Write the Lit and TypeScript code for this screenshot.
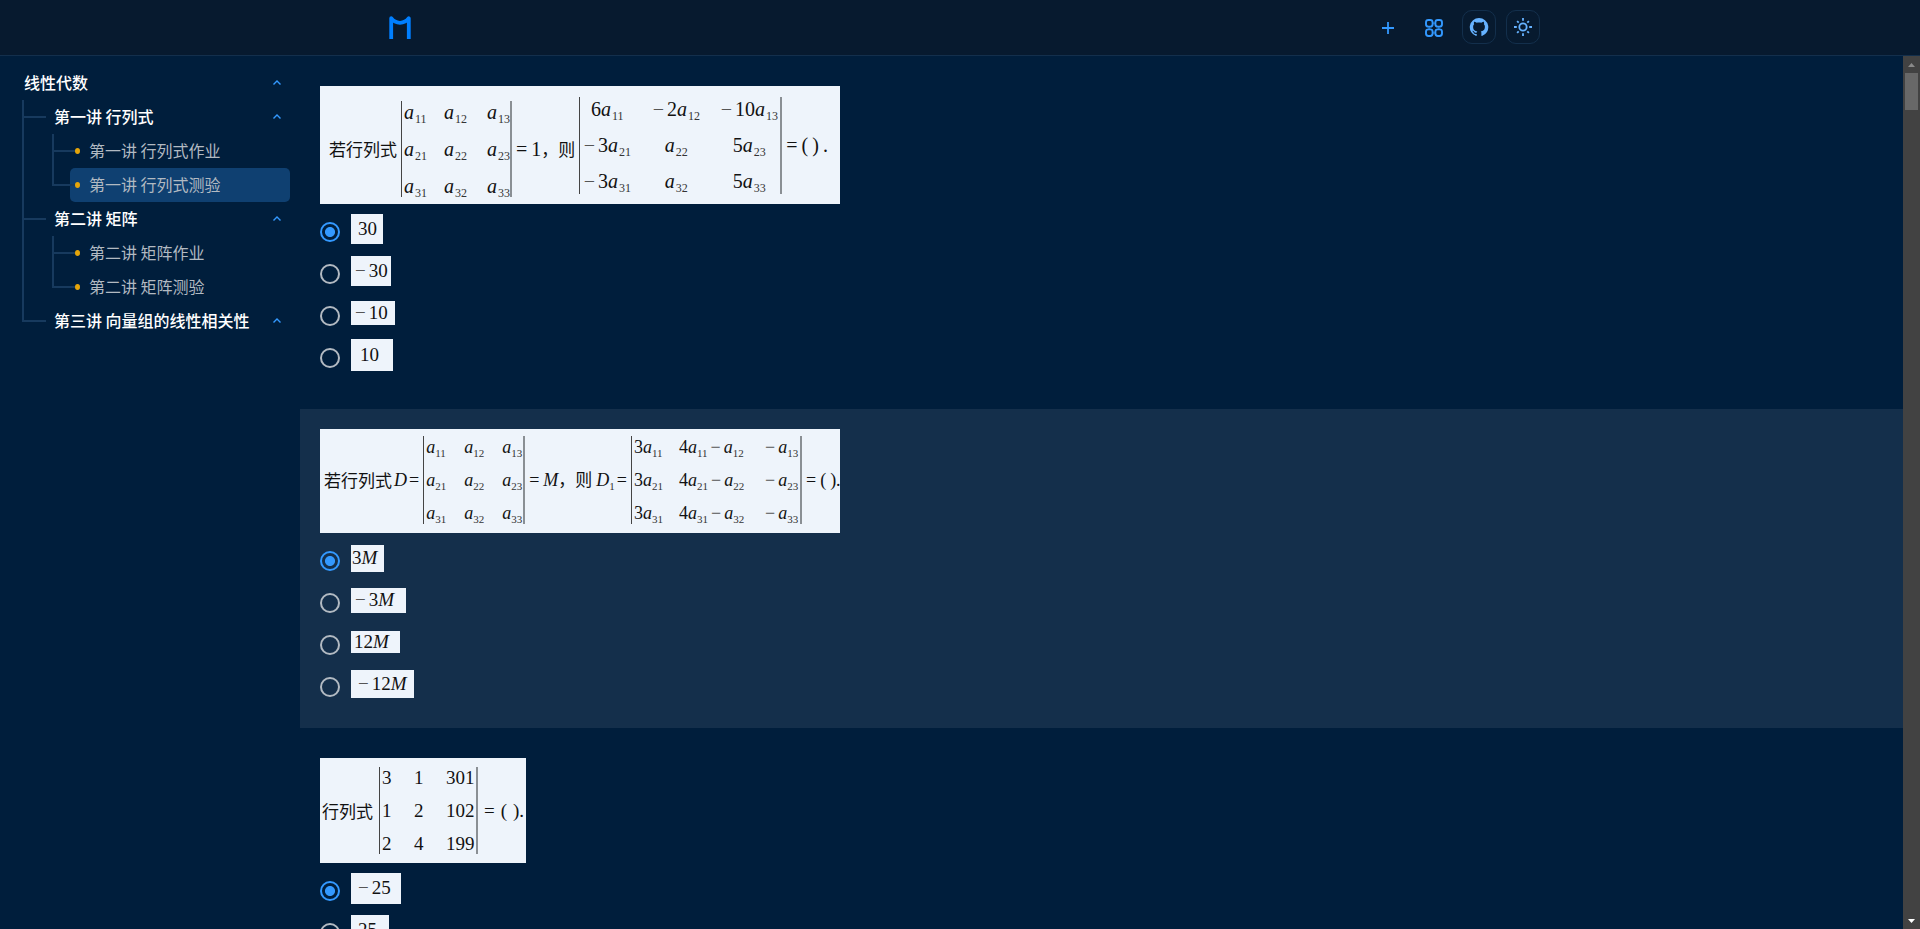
import { LitElement, html, css, svg, nothing, TemplateResult } from "lit";
import { customElement, property, state } from "lit/decorators.js";
import { classMap } from "lit/directives/class-map.js";
import { styleMap } from "lit/directives/style-map.js";

interface TreeNode {
  title: string;
  children?: TreeNode[];
  leaf?: boolean;
}

interface Choice {
  text: string;
  width: number;
  height: number;
  inset: number;
}

interface Question {
  id: string;
  stem: TemplateResult;
  choices: Choice[];
}

const course: TreeNode = {
  title: "线性代数",
  children: [
    {
      title: "第一讲 行列式",
      children: [
        { title: "第一讲 行列式作业", leaf: true },
        { title: "第一讲 行列式测验", leaf: true },
      ],
    },
    {
      title: "第二讲 矩阵",
      children: [
        { title: "第二讲 矩阵作业", leaf: true },
        { title: "第二讲 矩阵测验", leaf: true },
      ],
    },
    { title: "第三讲 向量组的线性相关性", children: [] },
  ],
};

/* Small formula notation: "_12" is a subscript, "-" a minus sign, latin letters are italic. */
function tex(source: string) {
  const parts = source.match(/_\d+|[A-Za-z]|-|[^_A-Za-z-]+/g) ?? [];
  return parts.map((p, i) => {
    if (p.startsWith("_")) return html`<sub>${p.slice(1)}</sub>`;
    if (p === "-") return html`<span class=${classMap({ minus: true, binary: i > 0 })}>−</span>`;
    if (/[A-Za-z]/.test(p)) return html`<i>${p}</i>`;
    return html`${p}`;
  });
}

function det(kind: string, rows: string[][]) {
  return html`<span class="det ${kind}"
    >${rows.flat().map((cell) => html`<span class="cell">${tex(cell)}</span>`)}</span
  >`;
}

const questions: Question[] = [
  {
    id: "q1",
    stem: html`<div class="stem large">
      <div class="run low">
        <span class="cjk">若行列式</span>
        ${det("plain", [
          ["a_11", "a_12", "a_13"],
          ["a_21", "a_22", "a_23"],
          ["a_31", "a_32", "a_33"],
        ])}
        <span>=</span>
        <span>1<span class="cjk">，则</span></span>
      </div>
      <div class="run">
        ${det("scaled", [
          ["6a_11", "-2a_12", "-10a_13"],
          ["-3a_21", "a_22", "5a_23"],
          ["-3a_31", "a_32", "5a_33"],
        ])}
        <span>=</span>
        <span class="paren"><span>(</span><span>)</span><span>.</span></span>
      </div>
    </div>`,
    choices: [
      { text: "30", width: 32, height: 30, inset: 7 },
      { text: "-30", width: 40, height: 30, inset: 4 },
      { text: "-10", width: 44, height: 24, inset: 4 },
      { text: "10", width: 42, height: 32, inset: 9 },
    ],
  },
  {
    id: "q2",
    stem: html`<div class="stem medium">
      <div class="run">
        <span class="cjk">若行列式</span>
        <span class="term"><i>D</i><span>=</span></span>
        ${det("square", [
          ["a_11", "a_12", "a_13"],
          ["a_21", "a_22", "a_23"],
          ["a_31", "a_32", "a_33"],
        ])}
        <span>=</span>
        <span><i>M</i><span class="cjk">，则</span></span>
        <span class="term"><span><i>D</i><sub>1</sub></span><span>=</span></span>
        ${det("mixed", [
          ["3a_11", "4a_11-a_12", "-a_13"],
          ["3a_21", "4a_21-a_22", "-a_23"],
          ["3a_31", "4a_31-a_32", "-a_33"],
        ])}
        <span>=</span>
        <span class="paren"><span>(</span><span>).</span></span>
      </div>
    </div>`,
    choices: [
      { text: "3M", width: 33, height: 27, inset: 1 },
      { text: "-3M", width: 55, height: 25, inset: 4 },
      { text: "12M", width: 49, height: 22, inset: 3 },
      { text: "-12M", width: 63, height: 28, inset: 7 },
    ],
  },
  {
    id: "q3",
    stem: html`<div class="stem short">
      <div class="run">
        <span class="cjk">行列式</span>
        ${det("numeric", [
          ["3", "1", "301"],
          ["1", "2", "102"],
          ["2", "4", "199"],
        ])}
        <span>=</span>
        <span class="paren"><span>(</span><span>).</span></span>
      </div>
    </div>`,
    choices: [
      { text: "-25", width: 50, height: 31, inset: 7 },
      { text: "25", width: 38, height: 30, inset: 7 },
    ],
  },
];

@customElement("app-header")
class AppHeader extends LitElement {
  static styles = css`
    :host {
      display: block;
      background: #071a2f;
      border-bottom: 1px solid #132f4c;
    }
    .bar {
      display: flex;
      justify-content: space-between;
      box-sizing: border-box;
      max-width: 1160px;
      margin: 0 auto;
      padding: 10px 0 11px 8px;
    }
    .logo {
      display: flex;
      align-items: center;
      color: #007fff;
    }
    .actions {
      display: flex;
      gap: 10px;
    }
    button,
    .boxed {
      display: flex;
      align-items: center;
      justify-content: center;
      box-sizing: border-box;
      width: 36px;
      height: 34px;
      padding: 0;
      border: 0;
      border-radius: 10px;
      background: none;
      color: #3399ff;
      cursor: pointer;
    }
    .boxed {
      width: 34px;
      border: 1px solid #132f4c;
      color: #66b2ff;
    }
  `;

  render() {
    return html`<header class="bar">
      <a class="logo" href="#" aria-label="首页">
        <svg width="24" height="24" viewBox="0 0 24 24" fill="none" stroke="currentColor" stroke-width="3.800">
          <path d="M3.200 24V3.200C6 7 9 7.800 12 7.800s6-.8 8.800-4.600V24" stroke-linejoin="round" />
        </svg>
      </a>
      <nav class="actions">
        <button aria-label="添加">
          <svg width="20" height="20" viewBox="0 0 20 20" stroke="currentColor" stroke-width="1.800">
            <path d="M10 5v12M4 11h12" />
          </svg>
        </button>
        <button aria-label="应用">
          <svg width="20" height="20" viewBox="0 0 20 20" fill="none" stroke="currentColor" stroke-width="1.900">
            <rect x="2" y="3" width="6.600" height="6.600" rx="2.400" />
            <rect x="11.400" y="3" width="6.600" height="6.600" rx="2.400" />
            <rect x="2" y="12.400" width="6.600" height="6.600" rx="2.400" />
            <rect x="11.400" y="12.400" width="6.600" height="6.600" rx="2.400" />
            <path d="M8 6.300h4M8 15.700h4M5.300 9v4M14.700 9v4" stroke-opacity=".5" />
          </svg>
        </button>
        <a class="boxed" href="#" aria-label="GitHub">
          <svg width="20" height="20" viewBox="0 0 24 24" fill="currentColor">
            <path
              d="M12 1.270a11 11 0 00-3.480 21.460c.55.09.73-.28.73-.55v-1.840c-3.030.64-3.670-1.460-3.670-1.460-.55-1.290-1.280-1.650-1.280-1.650-.92-.65.1-.65.1-.65 1.100 0 1.730 1.100 1.730 1.100.92 1.650 2.570 1.200 3.210.92a2 2 0 01.64-1.470c-2.470-.27-5.040-1.190-5.040-5.500 0-1.100.46-2.100 1.200-2.840a3.760 3.760 0 010-2.930s.91-.28 3.110 1.100c1.800-.49 3.700-.49 5.500 0 2.100-1.380 3.020-1.100 3.020-1.100a3.760 3.760 0 01.1 2.930c.83.74 1.200 1.740 1.200 2.940 0 4.210-2.570 5.130-5.040 5.400.45.37.82.92.82 2.020v3.030c0 .27.1.64.73.55A11 11 0 0012 1.270"
            />
          </svg>
        </a>
        <button class="boxed" aria-label="切换主题">
          <svg width="20" height="20" viewBox="0 0 20 20" fill="none" stroke="currentColor" stroke-width="1.800">
            <circle cx="10" cy="10" r="3.700" />
            <path
              d="M10 1v2.800M10 16.200V19M1 10h2.800M16.200 10H19M4.100 4.100l1.600 1.600M14.300 14.300l1.600 1.600M4.100 15.900l1.600-1.600M14.300 5.700l1.600-1.600"
            />
          </svg>
        </button>
      </nav>
    </header>`;
  }
}

@customElement("course-tree")
class CourseTree extends LitElement {
  @state() private selected = "第一讲 行列式测验";
  @state() private closed = new Set<string>();

  static styles = css`
    :host {
      display: block;
      box-sizing: border-box;
      padding: 10px;
    }
    ul {
      list-style: none;
      margin: 0;
      padding: 0;
    }
    ul ul {
      padding-left: 30px;
    }
    li {
      position: relative;
    }
    .row {
      display: flex;
      align-items: center;
      justify-content: space-between;
      box-sizing: border-box;
      width: 100%;
      height: 34px;
      padding: 0 9px 0 14px;
      border: 0;
      border-radius: 5px;
      background: none;
      color: #fff;
      font: 500 16px/32px "Noto Sans CJK SC", sans-serif;
      text-align: left;
      text-decoration: none;
      white-space: nowrap;
      cursor: pointer;
    }
    .title {
      padding-bottom: 2px;
    }
    .chevron {
      color: #3399ff;
    }
    .row.leaf {
      justify-content: flex-start;
      gap: 9px;
      padding-left: 5px;
      color: #b2bac2;
      font-weight: 400;
    }
    .row.selected {
      background: #0f4071;
    }
    .dot {
      width: 5px;
      height: 6px;
      border-radius: 50%;
      background: #e5a50a;
      z-index: 1;
    }
    /* connector lines between a branch and its children */
    ul ul > li::before,
    ul ul > li::after {
      content: "";
      position: absolute;
      left: -18px;
      background: #173a5e;
    }
    ul ul > li::before {
      top: 0;
      bottom: 0;
      width: 2px;
    }
    ul ul > li:last-child::before {
      bottom: auto;
      height: 18px;
    }
    ul ul > li::after {
      top: 16px;
      width: 24px;
      height: 2px;
    }
  `;

  private toggle(title: string) {
    const next = new Set(this.closed);
    next.has(title) ? next.delete(title) : next.add(title);
    this.closed = next;
  }

  private node(n: TreeNode): TemplateResult {
    if (n.leaf) {
      return html`<li>
        <a
          class=${classMap({ row: true, leaf: true, selected: n.title === this.selected })}
          href="#"
          @click=${(e: Event) => {
            e.preventDefault();
            this.selected = n.title;
          }}
          ><span class="dot"></span><span class="title">${n.title}</span></a
        >
      </li>`;
    }
    const open = !this.closed.has(n.title);
    return html`<li>
      <button class="row" aria-expanded=${open} @click=${() => this.toggle(n.title)}>
        <span class="title">${n.title}</span>
        <svg class="chevron" width="8" height="8" viewBox="0 0 8 8" fill="none" stroke="currentColor" stroke-width="1.400">
          ${open ? svg`<path d="M.5 5.500 4 2l3.500 3.500" />` : svg`<path d="M.5 2 4 5.500 7.500 2" />`}
        </svg>
      </button>
      ${open && n.children?.length ? html`<ul>${n.children.map((c) => this.node(c))}</ul>` : nothing}
    </li>`;
  }

  render() {
    return html`<nav aria-label="课程目录"><ul>${this.node(course)}</ul></nav>`;
  }
}

@customElement("question-card")
class QuestionCard extends LitElement {
  @property({ attribute: false }) question!: Question;
  @state() private picked = 0;

  static styles = css`
    :host {
      display: block;
      padding: 20px;
    }
    fieldset {
      display: flex;
      flex-direction: column;
      align-items: flex-start;
      gap: 7px;
      min-width: 0;
      margin: 0;
      padding: 0;
      border: 0;
    }
    .stem,
    .picture {
      display: flex;
      align-items: center;
      box-sizing: border-box;
      background: #eef4fb;
      color: #111;
      font-family: "Liberation Serif", serif;
      white-space: nowrap;
    }
    .run {
      display: flex;
      align-items: center;
      gap: 4px;
    }
    .large {
      width: 520px;
      height: 118px;
      gap: 4px;
      padding-left: 9px;
      font-size: 20px;
      line-height: 20px;
    }
    .low {
      padding-top: 8px;
    }
    .medium {
      width: 520px;
      height: 104px;
      padding: 0 0 3px 4px;
      font-size: 18px;
      line-height: 20px;
    }
    .medium .run > .cjk {
      margin-right: -2px;
    }
    .short {
      width: 206px;
      height: 105px;
      padding-left: 2px;
      font-size: 19px;
      line-height: 20px;
    }
    .short .run {
      gap: 6px;
    }
    .cjk {
      font-family: "Noto Sans CJK SC", sans-serif;
      font-size: 17px;
      font-weight: 400;
      line-height: 20px;
    }
    .paren {
      display: flex;
      gap: 4px;
    }
    .short .paren {
      gap: 6px;
    }
    .term {
      display: flex;
      gap: 2px;
    }
    sub {
      margin-left: 1px;
      font-size: 12px;
      line-height: 0;
      vertical-align: -4px;
      color: #333;
    }
    .medium sub {
      margin-left: 0;
      font-size: 11px;
    }
    .minus {
      margin-right: 3px;
      color: #555;
    }
    .minus.binary {
      margin-left: 3px;
    }
    .det {
      display: grid;
      align-content: center;
      align-items: center;
      box-sizing: border-box;
      border-left: 1px solid #444;
      border-right: 2px solid #8a8f94;
    }
    .plain {
      grid-template-columns: 40px 43px 23px;
      grid-auto-rows: 37px;
      height: 96px;
      padding-left: 2px;
    }
    .scaled {
      grid-template-columns: 54px 84px 62px;
      grid-auto-rows: 36px;
      height: 97px;
      text-align: center;
    }
    .square {
      grid-template-columns: 38px 38px 21px;
      grid-auto-rows: 33px;
      height: 88px;
      padding-left: 2px;
    }
    .mixed {
      grid-template-columns: 45px 86px 35px;
      grid-auto-rows: 33px;
      height: 88px;
      padding-left: 2px;
    }
    .numeric {
      grid-template-columns: 32px 32px 30px;
      grid-auto-rows: 33px;
      height: 87px;
      padding-left: 2px;
    }
    .choices {
      display: flex;
      flex-direction: column;
    }
    .choice {
      display: flex;
      align-items: center;
      gap: 11px;
      height: 42px;
      cursor: pointer;
    }
    input {
      appearance: none;
      box-sizing: border-box;
      width: 20px;
      height: 20px;
      margin: 0;
      border: 2px solid #b2bac2;
      border-radius: 50%;
    }
    input:checked {
      border-color: #3399ff;
      background: radial-gradient(circle, #3399ff 0 4.600px, transparent 5.400px);
    }
    .picture {
      margin-bottom: 6px;
      font-size: 19px;
      line-height: 20px;
    }
  `;

  render() {
    const q = this.question;
    return html`<fieldset>
      ${q.stem}
      <div class="choices">
        ${q.choices.map(
          (c, i) => html`<label class="choice">
            <input type="radio" name=${q.id} .checked=${i === this.picked} @change=${() => (this.picked = i)} />
            <span
              class="picture"
              style=${styleMap({ width: `${c.width}px`, height: `${c.height}px`, paddingLeft: `${c.inset}px` })}
              ><span>${tex(c.text)}</span></span
            >
          </label>`,
        )}
      </div>
    </fieldset>`;
  }
}

@customElement("app-root")
class AppRoot extends LitElement {
  static styles = css`
    :host {
      display: grid;
      grid-template-rows: auto minmax(0, 1fr);
      height: 100vh;
      overflow: hidden;
      background: #001e3c;
    }
    .body {
      display: grid;
      grid-template-columns: 300px minmax(0, 1fr) 17px;
      min-height: 0;
    }
    main {
      display: flex;
      flex-direction: column;
      gap: 10px;
      padding-top: 10px;
      overflow: hidden;
    }
    question-card {
      flex: none;
    }
    .shaded {
      background: #142f4b;
    }
    .scrollbar {
      display: grid;
      grid-template-rows: 17px minmax(0, 1fr) 17px;
      justify-items: center;
      background: #424242;
    }
    .arrow {
      align-self: center;
    }
    .thumb {
      width: 13px;
      height: 37px;
      background: #686868;
    }
  `;

  render() {
    return html`
      <app-header></app-header>
      <div class="body">
        <course-tree></course-tree>
        <main>
          ${questions.map(
            (q, i) => html`<question-card class=${classMap({ shaded: i % 2 === 1 })} .question=${q}></question-card>`,
          )}
        </main>
        <div class="scrollbar" aria-hidden="true">
          <svg class="arrow" width="7" height="4" viewBox="0 0 7 4" fill="#8a8a8a"><path d="M0 4 3.500 0 7 4z" /></svg>
          <div class="thumb"></div>
          <svg class="arrow" width="7" height="4" viewBox="0 0 7 4" fill="#fff"><path d="M0 0h7L3.500 4z" /></svg>
        </div>
      </div>
    `;
  }
}
